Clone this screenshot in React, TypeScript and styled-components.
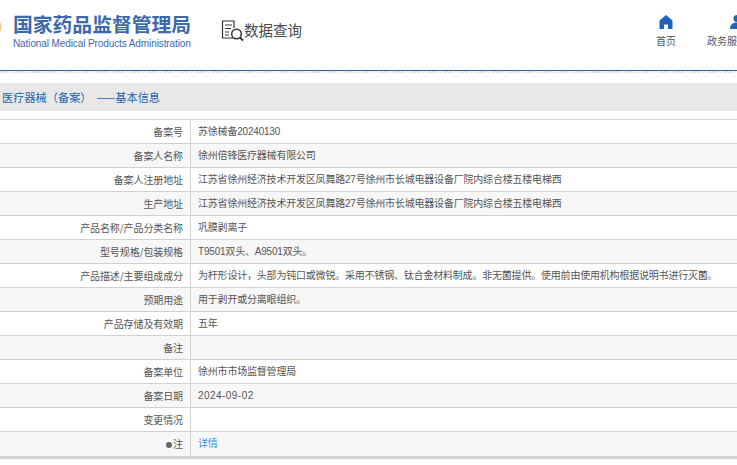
import React from 'react';
import styled, { createGlobalStyle } from 'styled-components';

const GlobalStyle = createGlobalStyle`
  html, body {
    margin: 0;
    padding: 0;
    background: #fff;
    overflow: hidden;
  }
  body {
    font-family: "Noto Sans CJK SC", "Liberation Sans", sans-serif;
  }
`;

const Page = styled.div`
  width: 737px;
  height: 465px;
  overflow: hidden;
`;

const Header = styled.header`
  display: flex;
  align-items: flex-start;
  height: 70px;
  border-bottom: 1px solid #1f68a8;
  box-sizing: content-box;
`;

/* the emblem is almost entirely off the left edge, only a sliver shows */
const EmblemEdge = styled.div`
  flex: none;
  width: 1px;
  height: 8px;
  margin-top: 23px;
  background: #eec48c;
`;

const Logo = styled.div`
  width: 178px;
  margin: 13px 0 0 12px;
  flex: none;
`;

const LogoTitle = styled.div`
  font-size: 19.8px;
  line-height: 22px;
  font-weight: 700;
  color: #3a69ae;
  white-space: nowrap;
`;

const LogoSub = styled.div`
  font-family: "Liberation Sans", sans-serif;
  font-size: 10px;
  letter-spacing: -0.1px;
  line-height: 12px;
  margin-top: 3px;
  color: #3a69ae;
  white-space: nowrap;
`;

const QueryTitle = styled.div`
  display: flex;
  align-items: center;
  margin: 19px 0 0 30px;
  font-size: 14.5px;
  line-height: 24px;
  color: #4a4a4a;
  white-space: nowrap;
  span {
    margin-top: -3px;
  }
`;

const Nav = styled.nav`
  display: flex;
  margin: 15px 0 0 auto;
  gap: 21px;
  width: 91px;
  flex: none;
  overflow: hidden;
`;

const NavItem = styled.div<{ $iconShift?: number }>`
  flex: none;
  width: 40px;
  display: flex;
  flex-direction: column;
  align-items: center;
  font-size: 10px;
  line-height: 14px;
  color: #555;
  white-space: nowrap;
  svg {
    display: block;
    margin-bottom: 5px;
    margin-left: ${props => props.$iconShift || 0}px;
  }
`;

const Hatch = styled.div`
  height: 2px;
  background: repeating-linear-gradient(135deg, #cfe0ee 0 1px, #fff 1px 2px);
`;

const Crumb = styled.div`
  margin-top: 10px;
  height: 28px;
  padding-left: 2px;
  background: #e8e8e8;
  font-size: 11.2px;
  line-height: 28px;
  color: #1d62a8;
  white-space: nowrap;
`;

const CrumbDash = styled.span`
  padding-left: 5px;
`;

const Table = styled.div`
  margin-top: 8px;
  border-top: 1px solid #d0d0d0;
  border-bottom: 3px solid #d0d0d0;
`;

const Row = styled.div<{ $shaded: boolean }>`
  display: grid;
  grid-template-columns: 191px 1fr;
  height: 24px;
  box-sizing: border-box;
  background: ${props => (props.$shaded ? '#f7f7f7' : '#fff')};
  border-bottom: 1px solid #d0d0d0;
  font-size: 10px;
  line-height: 23px;
  color: #555;
  white-space: nowrap;
  &:last-child {
    border-bottom: 0;
  }
`;

const Label = styled.div`
  padding-right: 7px;
  text-align: right;
  border-right: 1px solid #d0d0d0;
  letter-spacing: -0.1px;
`;

const Value = styled.div`
  padding-left: 7px;
  font-family: "Liberation Sans", "Noto Sans CJK SC", sans-serif;
  letter-spacing: -0.2px;
`;

const DateText = styled.span`
  letter-spacing: 0.45px;
`;

const Link = styled.span`
  color: #3d8fdc;
`;

const NoteDot = styled.span`
  display: inline-block;
  width: 6px;
  height: 6px;
  margin-right: 1px;
  border-radius: 50%;
  background: #666;
`;

const DocIcon = () => (
  <svg width="23" height="24" viewBox="0 0 23 24" fill="none" stroke="#333" strokeWidth="1.2">
    <path d="M12 19H1.500V2H13V9" />
    <path d="M4 6h7M4 9.500h6M4 13h4M4 16h4" />
    <circle cx="15.500" cy="15" r="4.800" strokeWidth="1.500" />
    <path d="M19 18.500l3 3" strokeWidth="2" />
  </svg>
);

const HomeIcon = () => (
  <svg width="14" height="14" viewBox="0 0 14 14" fill="#1f62b8">
    <path d="M7 0L0.500 5.500V14H5V9.500H9V14H13.500V5.500Z" />
  </svg>
);

const UserIcon = () => (
  <svg width="14" height="14" viewBox="0 0 14 14" fill="#1f62b8">
    <circle cx="7" cy="3.500" r="3.500" />
    <path d="M0 14C0 9.500 3 7.500 7 7.500S14 9.500 14 14Z" />
  </svg>
);

const rows: { label: React.ReactNode; value?: React.ReactNode }[] = [
  { label: '备案号', value: '苏徐械备20240130' },
  { label: '备案人名称', value: '徐州倍锋医疗器械有限公司' },
  { label: '备案人注册地址', value: '江苏省徐州经济技术开发区凤舞路27号徐州市长城电器设备厂院内综合楼五楼电梯西' },
  { label: '生产地址', value: '江苏省徐州经济技术开发区凤舞路27号徐州市长城电器设备厂院内综合楼五楼电梯西' },
  { label: '产品名称/产品分类名称', value: '巩膜剥离子' },
  { label: '型号规格/包装规格', value: 'T9501双头、A9501双头。' },
  {
    label: '产品描述/主要组成成分',
    value: '为杆形设计，头部为钝口或微锐。采用不锈钢、钛合金材料制成。非无菌提供。使用前由使用机构根据说明书进行灭菌。',
  },
  { label: '预期用途', value: '用于剥开或分离眼组织。' },
  { label: '产品存储及有效期', value: '五年' },
  { label: '备注' },
  { label: '备案单位', value: '徐州市市场监督管理局' },
  { label: '备案日期', value: <DateText>2024-09-02</DateText> },
  { label: '变更情况' },
  {
    label: (
      <>
        <NoteDot />注
      </>
    ),
    value: <Link>详情</Link>,
  },
];

export default function App() {
  return (
    <Page>
      <GlobalStyle />
      <Header>
        <EmblemEdge />
        <Logo>
          <LogoTitle>国家药品监督管理局</LogoTitle>
          <LogoSub>National Medical Products Administration</LogoSub>
        </Logo>
        <QueryTitle>
          <DocIcon />
          <span>数据查询</span>
        </QueryTitle>
        <Nav>
          <NavItem>
            <HomeIcon />
            首页
          </NavItem>
          <NavItem $iconShift={20}>
            <UserIcon />
            政务服务
          </NavItem>
        </Nav>
      </Header>
      <Hatch />
      <Crumb>
        医疗器械（备案）<CrumbDash>——</CrumbDash>基本信息
      </Crumb>
      <Table>
        {rows.map((row, i) => (
          <Row key={i} $shaded={i % 2 === 1}>
            <Label>{row.label}</Label>
            <Value>{row.value}</Value>
          </Row>
        ))}
      </Table>
    </Page>
  );
}
